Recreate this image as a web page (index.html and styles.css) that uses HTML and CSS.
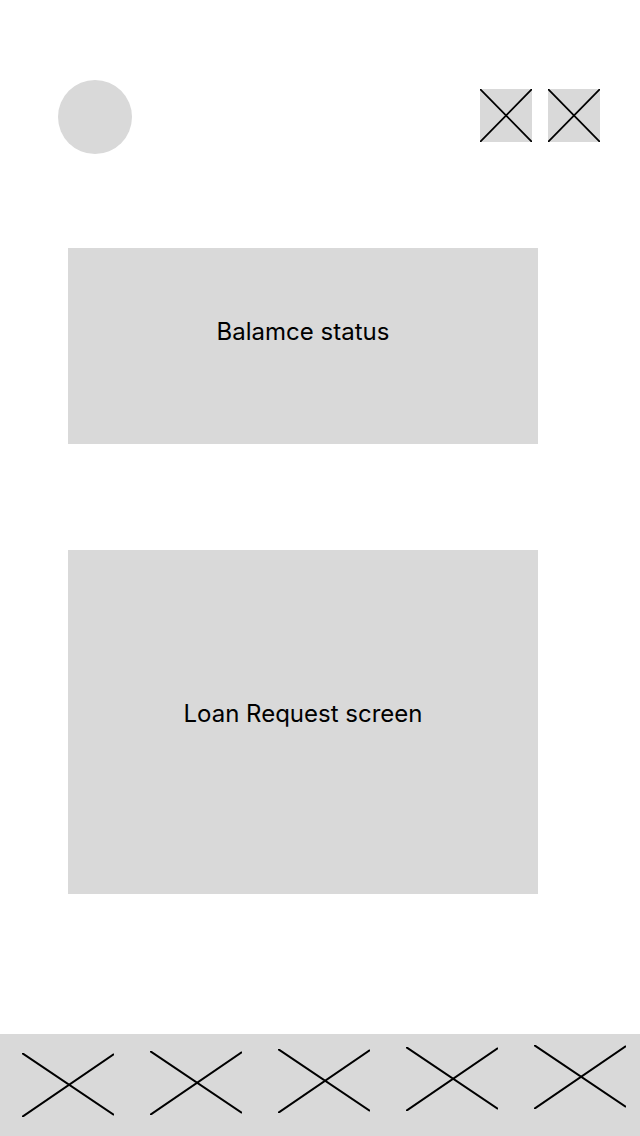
FILE: index.html
```html
<!DOCTYPE html>
<html lang="en">
<head>
<meta charset="utf-8">
<title>Home</title>
<link rel="stylesheet" href="styles.css">
</head>
<body>
<div class="screen">
  <header class="top">
    <div class="avatar"></div>
    <div class="actions">
      <svg class="box-icon" viewBox="0 0 52 53"><rect width="52" height="53" fill="#d9d9d9"/><path d="M0 0L52 53M52 0L0 53" stroke="#000" stroke-width="1.8"/></svg>
      <svg class="box-icon" viewBox="0 0 52 53"><rect width="52" height="53" fill="#d9d9d9"/><path d="M0 0L52 53M52 0L0 53" stroke="#000" stroke-width="1.8"/></svg>
    </div>
  </header>
  <main class="content">
    <section class="card card-balance"><span class="card-label">Balamce status</span></section>
    <section class="card card-loan"><span class="card-label">Loan Request screen</span></section>
  </main>
  <nav class="tabbar">
    <svg class="tab tab1" viewBox="0 0 92 64"><path d="M0 0L92 62M92 1L0 64" stroke="#000" stroke-width="2"/></svg>
    <svg class="tab tab2" viewBox="0 0 92 64"><path d="M0 0L92 62M92 1L0 64" stroke="#000" stroke-width="2"/></svg>
    <svg class="tab tab3" viewBox="0 0 92 64"><path d="M0 0L92 62M92 1L0 64" stroke="#000" stroke-width="2"/></svg>
    <svg class="tab tab4" viewBox="0 0 92 64"><path d="M0 0L92 62M92 1L0 64" stroke="#000" stroke-width="2"/></svg>
    <svg class="tab tab5" viewBox="0 0 92 64"><path d="M0 0L92 62M92 1L0 64" stroke="#000" stroke-width="2"/></svg>
  </nav>
</div>
</body>
</html>
```

FILE: styles.css
```css
* { box-sizing: border-box; }
html, body { margin: 0; padding: 0; background: #fff; }
body { font-family: Inter, "Liberation Sans", sans-serif; color: #000; }
.screen { width: 640px; height: 1136px; display: flex; flex-direction: column; overflow: hidden; }
.top { display: flex; justify-content: space-between; align-items: flex-start; padding: 80px 40px 0 58px; height: 154px; }
.avatar { width: 74px; height: 74px; border-radius: 50%; background: #d9d9d9; }
.actions { display: flex; gap: 16px; margin-top: 9px; }
.box-icon { width: 52px; height: 53px; display: block; }
.content { display: flex; flex-direction: column; padding-left: 68px; }
.card { width: 470px; background: #d9d9d9; display: flex; align-items: center; justify-content: center; }
.card-balance { margin-top: 94px; height: 196px; padding-bottom: 29px; }
.card-loan { margin-top: 106px; height: 344px; padding-bottom: 16px; }
.card-label { font-size: 24px; line-height: 30px; }
.tabbar { margin-top: auto; height: 102px; background: #d9d9d9; display: flex; gap: 36px; padding-left: 22px; align-items: flex-start; }
.tab { width: 92px; height: 64px; display: block; }
.tab1 { margin-top: 19px; }
.tab2 { margin-top: 17px; }
.tab3 { margin-top: 15px; }
.tab4 { margin-top: 13px; }
.tab5 { margin-top: 11px; }
```
